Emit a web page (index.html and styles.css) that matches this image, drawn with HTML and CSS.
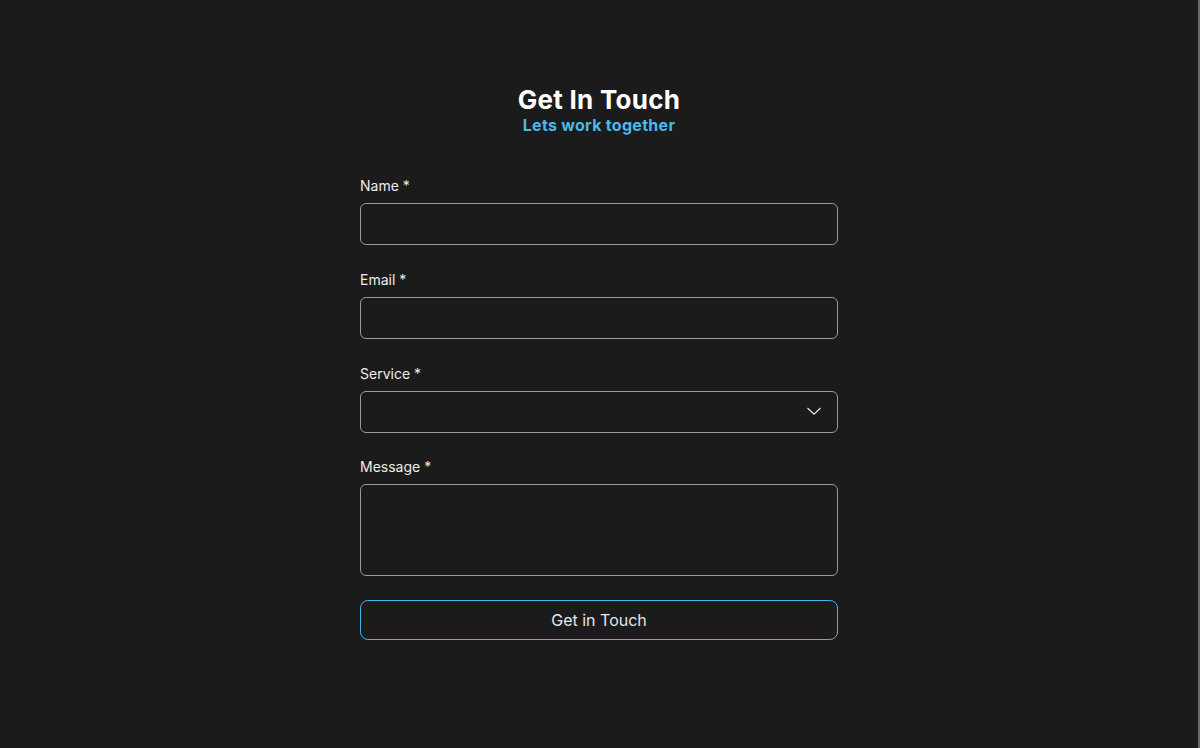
FILE: index.html
```html
<!DOCTYPE html>
<html lang="en">
<head>
<meta charset="utf-8">
<title>Get In Touch</title>
<link rel="stylesheet" href="styles.css">
</head>
<body>
<main class="page">
  <header class="head">
    <h1 class="title">Get In Touch</h1>
    <p class="subtitle">Lets work together</p>
  </header>
  <form class="form">
    <div class="field">
      <label class="label" for="name">Name *</label>
      <input class="input" id="name" type="text">
    </div>
    <div class="field">
      <label class="label" for="email">Email *</label>
      <input class="input" id="email" type="email">
    </div>
    <div class="field field-tight">
      <label class="label" for="service">Service *</label>
      <div class="select-wrap">
        <select class="input select" id="service"><option></option></select>
        <svg class="chevron" width="16" height="10" viewBox="0 0 16 10" fill="none"><path d="M1.5 2 L8 8.2 L14.5 2" stroke="#e6e6e6" stroke-width="1.3"/></svg>
      </div>
    </div>
    <div class="field field-tight">
      <label class="label" for="message">Message *</label>
      <textarea class="input textarea" id="message"></textarea>
    </div>
    <button class="btn" type="button">Get in Touch</button>
  </form>
</main>
</body>
</html>
```
FILE: styles.css
```css
html, body {
  margin: 0;
  padding: 0;
  background: #1b1b1b;
}
body {
  font-family: Inter, "Liberation Sans", sans-serif;
  color: #e8e8e8;
  height: 748px;
  box-sizing: border-box;
  border-right: 2px solid #6a6a6a;
}
.page {
  width: 478px;
  margin: 0 auto;
  padding-top: 84px;
}
.head {
  text-align: center;
}
.title {
  margin: 0;
  font-family: Inter, "Liberation Sans", sans-serif;
  font-weight: 700;
  font-size: 26px;
  line-height: 32px;
  color: #ffffff;
  letter-spacing: 0.25px;
}
.subtitle {
  margin: 0;
  font-family: Inter, "Liberation Sans", sans-serif;
  font-weight: 700;
  font-size: 16px;
  line-height: 18px;
  color: #4bb8ee;
  letter-spacing: 0.3px;
}
.form {
  display: flex;
  flex-direction: column;
  margin-top: 42px;
}
.field {
  display: flex;
  flex-direction: column;
  margin-bottom: 25px;
}
.field-tight {
  margin-bottom: 24px;
}
.label {
  font-size: 14px;
  line-height: 20px;
  margin-bottom: 7px;
  color: #ececec;
}
.input {
  box-sizing: border-box;
  width: 100%;
  height: 42px;
  background: #1b1b1b;
  border: 1px solid #9a9a9a;
  border-radius: 6px;
  color: #eee;
  font-family: inherit;
  font-size: 14px;
  padding: 0 12px;
  margin: 0;
  outline: none;
}
.select-wrap {
  position: relative;
}
.select {
  appearance: none;
  -webkit-appearance: none;
  display: block;
}
.chevron {
  position: absolute;
  right: 16px;
  top: 15px;
  pointer-events: none;
}
.textarea {
  height: 92px;
  resize: none;
  display: block;
  padding: 10px 12px;
}
.btn {
  box-sizing: border-box;
  width: 100%;
  height: 40px;
  background: #1b1b1b;
  border: 1px solid #46b3ea;
  border-radius: 8px;
  color: #e6e6e6;
  font-family: Inter, "Liberation Sans", sans-serif;
  font-size: 16px;
  cursor: pointer;
}
```
